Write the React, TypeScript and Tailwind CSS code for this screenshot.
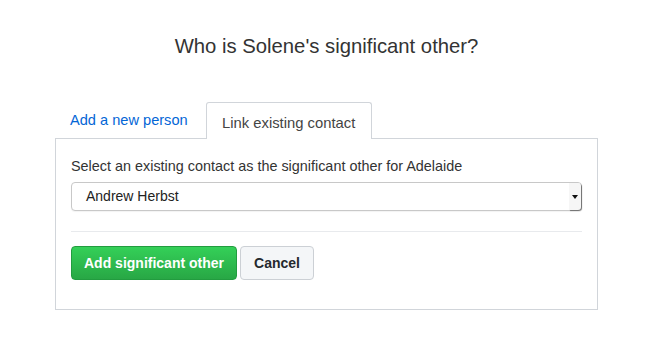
import React from 'react';

const App: React.FC = () => {
  return (
    <div className="min-h-[360px] w-[646px] bg-white font-['Liberation_Sans',Arial,sans-serif] text-[#333]">
      <div className="ml-[55px] w-[543px] pt-[32px]">
        <h1 className="text-center text-[20.3px] leading-[28px] text-[#333]">
          Who is Solene's significant other?
        </h1>

        {/* Tabs */}
        <div className="mt-[42px] flex h-[36px] items-end gap-[3px]">
          <button className="h-[36px] px-[15px] pt-[2px] text-[14.6px] text-[#0366d6]">Add a new person</button>
          <div className="relative -mb-px h-[37px] w-[166px] rounded-t-[3px] border border-b-0 border-[#d1d5da] bg-white pt-[9px] text-center text-[14.8px] text-[#444]">
            Link existing contact
          </div>
        </div>

        {/* Panel */}
        <div className="border border-[#d1d5da] px-[15px] pb-[29px] pt-[17px]">
          <p className="text-[14.4px] leading-[20px] text-[#333]">
            Select an existing contact as the significant other for Adelaide
          </p>
          <div className="mt-[6px] flex h-[29px] items-center justify-between rounded-[4px] border border-[#c8c8c8] bg-white pl-[14px] shadow-[0_1px_1px_rgba(0,0,0,0.05)]">
            <span className="text-[14px] text-[#222]">Andrew Herbst</span>
            <div className="flex h-[27px] w-[12px] items-center justify-center rounded-r-[3px] bg-[#f6f6f6] shadow-[1px_1px_1px_rgba(0,0,0,0.45)]">
              <svg width="6" height="4" viewBox="0 0 6 4">
                <path d="M0 0h6L3 4z" fill="#111" />
              </svg>
            </div>
          </div>

          <div className="mt-[20px] border-t border-[#e8eaed]" />

          <div className="mt-[14px] flex gap-[3px]">
            <button className="h-[34px] w-[166px] rounded-[4px] border border-[#229c3f] bg-gradient-to-b from-[#34d058] to-[#28a745] text-[14px] font-bold text-white">
              Add significant other
            </button>
            <button className="h-[34px] w-[74px] rounded-[4px] border border-[#ccd0d5] bg-[#f4f6f8] text-[14px] font-bold text-[#24292e]">
              Cancel
            </button>
          </div>
        </div>
      </div>
    </div>
  );
};

export default App;
